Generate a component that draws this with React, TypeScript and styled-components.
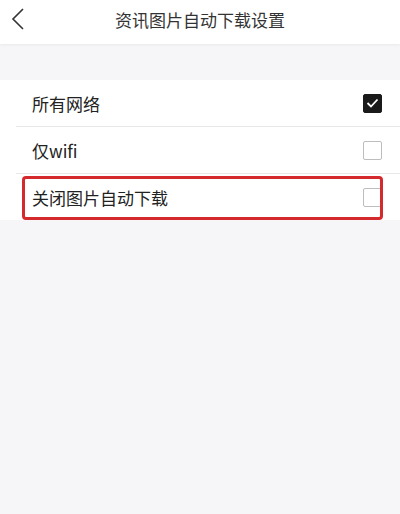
import React, { useState } from "react";
import styled, { createGlobalStyle } from "styled-components";

const GlobalStyle = createGlobalStyle`
  html, body {
    margin: 0;
    padding: 0;
    background: #f6f6f8;
    font-family: "Noto Sans CJK SC", "Noto Sans", sans-serif;
  }
`;

interface Option {
  id: string;
  label: string;
}

const options: Option[] = [
  { id: "all", label: "所有网络" },
  { id: "wifi", label: "仅wifi" },
  { id: "off", label: "关闭图片自动下载" },
];

const App: React.FC = () => {
  const [selected, setSelected] = useState("all");

  return (
    <>
      <GlobalStyle />
      <Page>
        <Header>
          <BackButton aria-label="返回">
            <svg width="14" height="24" viewBox="0 0 14 24">
              <path d="M12 2 L2 12 L12 22" fill="none" stroke="#333" strokeWidth="1.6" />
            </svg>
          </BackButton>
          <Title>资讯图片自动下载设置</Title>
        </Header>
        <Gap />
        <List>
          {options.map((o, i) => (
            <Row key={o.id} last={i === options.length - 1} onClick={() => setSelected(o.id)}>
              <Label>{o.label}</Label>
              <Box checked={selected === o.id}>
                {selected === o.id && (
                  <svg width="13" height="10" viewBox="0 0 13 10">
                    <path d="M1.5 5 L5 8.5 L11.5 1.5" fill="none" stroke="#fff" strokeWidth="1.8" />
                  </svg>
                )}
              </Box>
              {o.id === "off" && <Highlight />}
            </Row>
          ))}
        </List>
      </Page>
    </>
  );
};

const Page = styled.div`
  width: 400px;
  min-height: 514px;
  background: #f6f6f8;
`;

const Header = styled.div`
  position: relative;
  height: 44px;
  display: flex;
  align-items: center;
  justify-content: center;
  background: #fff;
  box-shadow: 0 1px 3px rgba(0, 0, 0, 0.05);
`;

const BackButton = styled.button`
  position: absolute;
  left: 11px;
  top: 7px;
  padding: 0;
  border: none;
  background: none;
  display: flex;
`;

const Title = styled.div`
  font-size: 17px;
  color: #333;
  margin-top: -6px;
`;

const Gap = styled.div`
  height: 36px;
`;

const List = styled.div`
  background: #fff;
`;

const Row = styled.div<{ last: boolean }>`
  position: relative;
  height: 46px;
  margin-left: 16px;
  padding: 0 18px 0 16px;
  display: flex;
  align-items: center;
  justify-content: space-between;
  border-bottom: ${({ last }) => (last ? "none" : "1px solid #e8e8ea")};
`;

const Label = styled.span`
  font-size: 17px;
  color: #222;
`;

const Box = styled.span<{ checked: boolean }>`
  width: 19px;
  height: 19px;
  box-sizing: border-box;
  display: flex;
  align-items: center;
  justify-content: center;
  background: ${({ checked }) => (checked ? "#1a1a1a" : "#fff")};
  border: 1.5px solid ${({ checked }) => (checked ? "#1a1a1a" : "#bdbdbd")};
  border-radius: 2px;
`;

const Highlight = styled.span`
  position: absolute;
  left: 6px;
  right: 17px;
  top: 2px;
  bottom: 0;
  border: 3px solid #d42a2e;
  border-radius: 4px;
  pointer-events: none;
`;

export default App;
